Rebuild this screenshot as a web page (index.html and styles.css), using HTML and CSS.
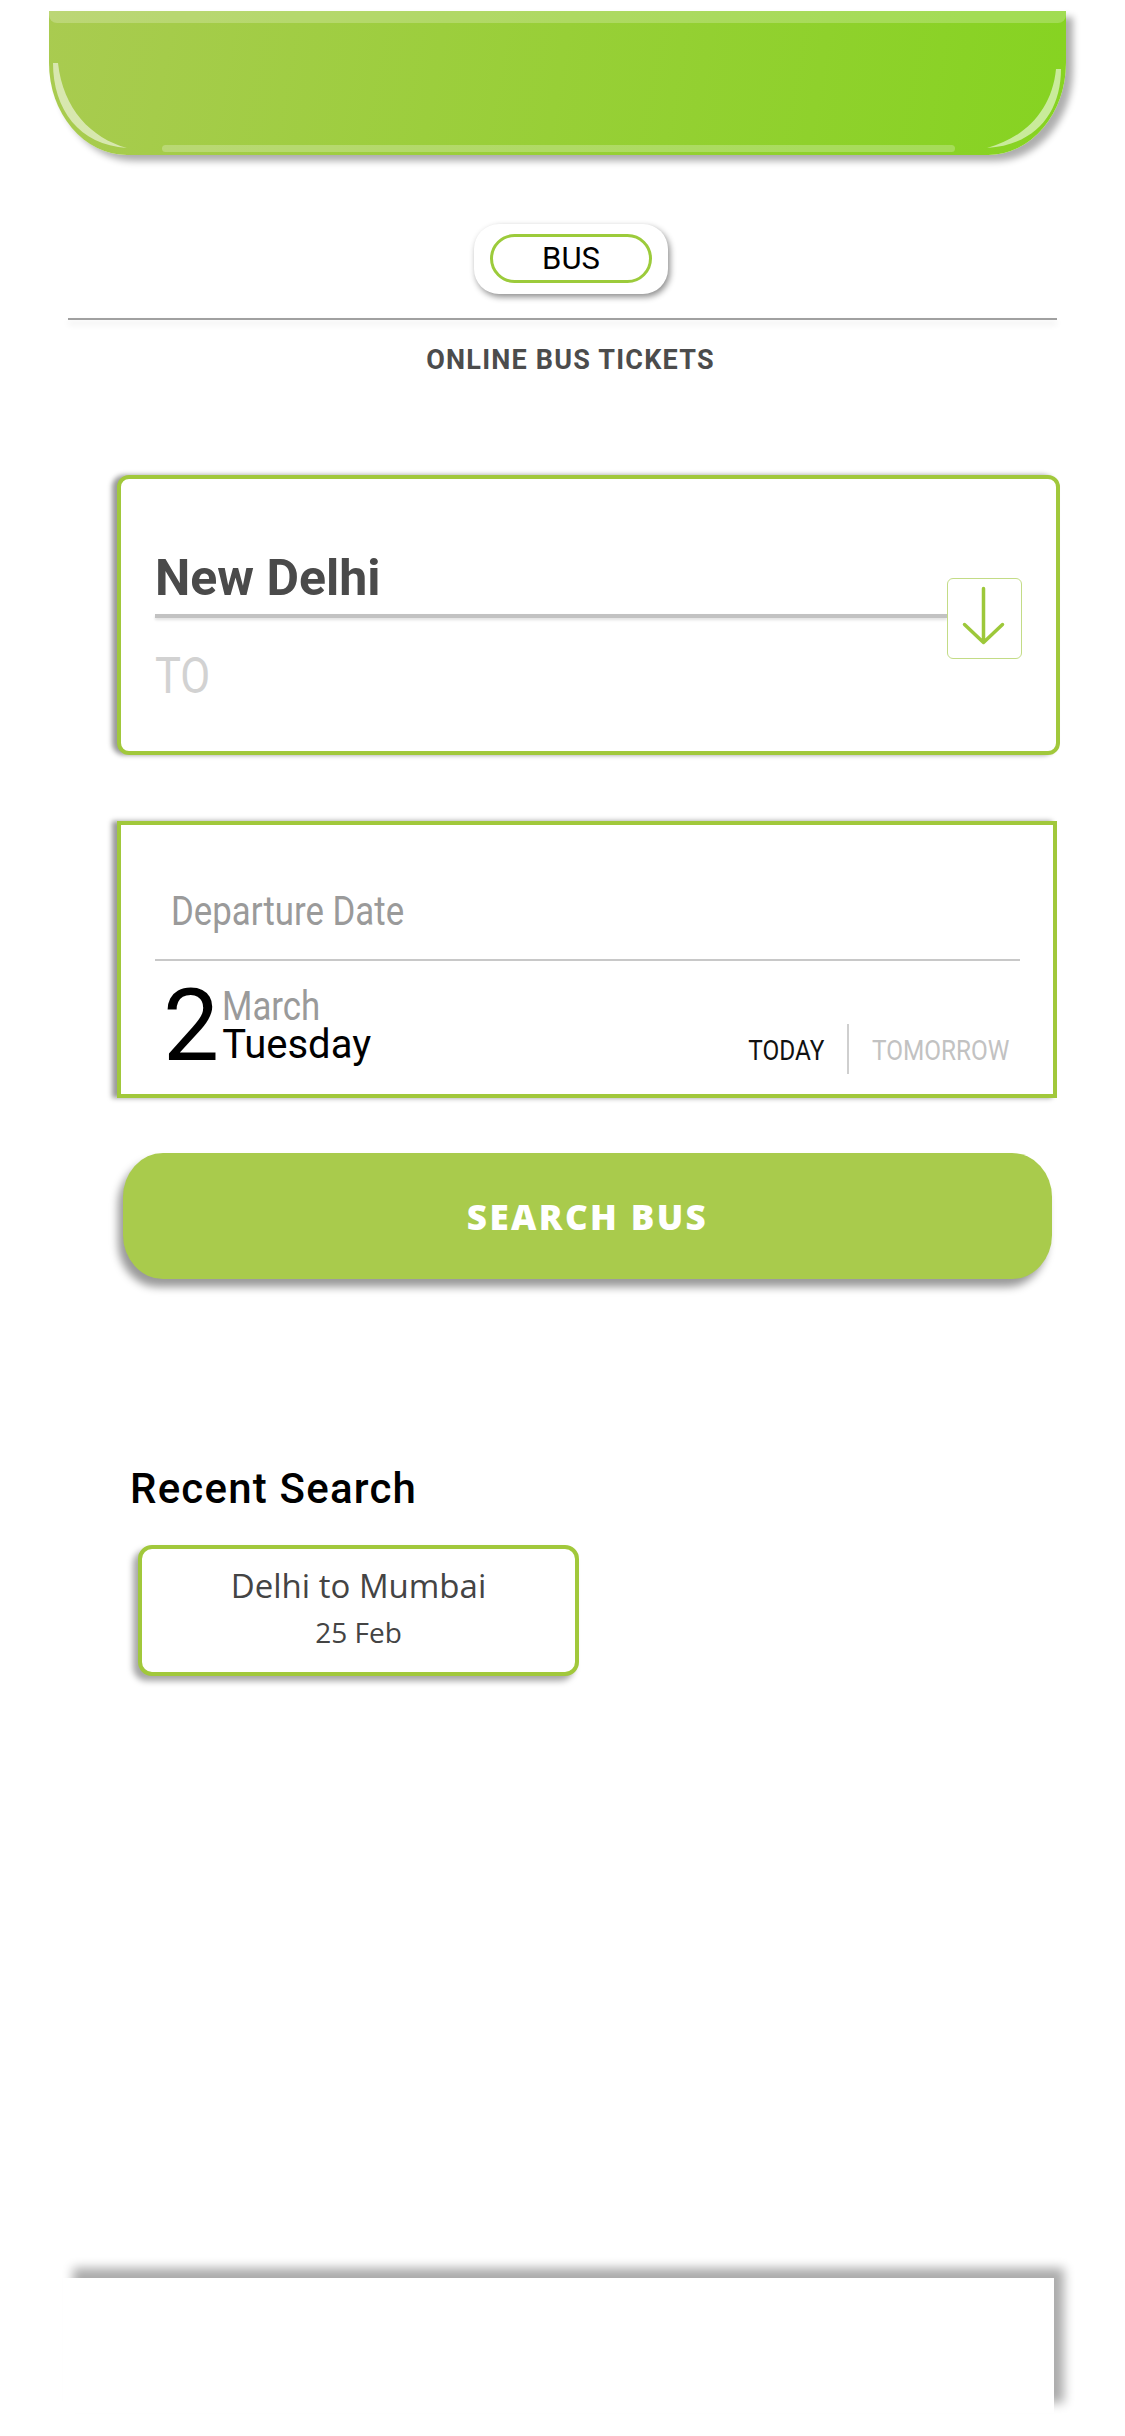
FILE: index.html
```html
<!DOCTYPE html>
<html lang="en">
<head>
<meta charset="utf-8">
<title>Online Bus Tickets</title>
<link rel="stylesheet" href="styles.css">
</head>
<body>
<div class="page">
  <header class="topbar">
    <svg class="gloss" viewBox="0 0 1017 144" preserveAspectRatio="none" aria-hidden="true">
      <path d="M4,52 C4,98 30,134 78,137 C42,127 14,98 9,52 Z" fill="rgba(255,255,255,0.55)"/>
      <path d="M1012,58 C1012,100 988,134 938,137 C975,127 1003,100 1007,58 Z" fill="rgba(255,255,255,0.55)"/>
      <rect x="113" y="134" width="793" height="7" rx="3.5" fill="rgba(255,255,255,0.24)"/>
    </svg>
  </header>

  <div class="mode">
    <div class="mode-box"><span class="mode-pill">BUS</span></div>
  </div>

  <div class="rule"></div>
  <h1 class="tagline">ONLINE BUS TICKETS</h1>

  <section class="card route">
    <div class="route-fields">
      <div class="city">New Delhi</div>
      <div class="route-line"></div>
      <div class="city-to"><span class="cond">TO</span></div>
    </div>
    <div class="swap">
      <svg viewBox="0 0 72 78" aria-hidden="true">
        <path d="M35.5 9.5 V63.5 M16.5 45.5 L35.5 63.5 L54.5 45.5" fill="none" stroke="#9dc83a" stroke-width="3.5" stroke-linecap="round" stroke-linejoin="round"/>
      </svg>
    </div>
  </section>

  <section class="card date">
    <div class="date-label"><span class="cond">Departure Date</span></div>
    <div class="date-line"></div>
    <div class="date-row">
      <div class="day">2</div>
      <div class="month-week">
        <div class="month"><span class="cond">March</span></div>
        <div class="weekday">Tuesday</div>
      </div>
      <div class="quick">
        <span class="quick-opt today"><span class="cond cond-r">TODAY</span></span>
        <span class="quick-sep"></span>
        <span class="quick-opt tomorrow"><span class="cond">TOMORROW</span></span>
      </div>
    </div>
  </section>

  <button class="search" type="button">SEARCH BUS</button>

  <h2 class="recent-title">Recent Search</h2>
  <div class="recent-card">
    <div class="recent-route">Delhi to Mumbai</div>
    <div class="recent-date">25 Feb</div>
  </div>

  <nav class="bottom-bar"></nav>
</div>
</body>
</html>
```

FILE: styles.css
```css
* { box-sizing: border-box; }

body {
  margin: 0;
  background: #ffffff;
  font-family: Roboto, "Noto Sans", sans-serif;
}

.page {
  width: 1125px;
  min-height: 2436px;
  display: flex;
  flex-direction: column;
  align-items: flex-start;
}

/* ---------- top green bar ---------- */
.topbar {
  position: relative;
  margin: 11px 0 0 49px;
  width: 1017px;
  height: 144px;
  border-radius: 0 0 78px 78px / 0 0 92px 92px;
  background: linear-gradient(100deg, #a9cb50 0%, #98cf37 50%, #86d321 100%);
  box-shadow: 7px 6px 7px rgba(0, 0, 0, 0.32);
}

.topbar::before {
  content: "";
  position: absolute;
  left: 0;
  right: 0;
  top: 0;
  height: 12px;
  background: rgba(255, 255, 255, 0.22);
  border-radius: 0 0 8px 8px;
}

.gloss {
  position: absolute;
  left: 0;
  top: 0;
  width: 100%;
  height: 100%;
}

/* ---------- mode selector ---------- */
.mode {
  margin: 69px 0 0 474px;
}

.mode-box {
  width: 194px;
  height: 70px;
  padding: 10px 16px;
  background: #fff;
  border-radius: 25px;
  box-shadow: 2px 3px 6px rgba(0, 0, 0, 0.45);
}

.mode-pill {
  display: block;
  height: 49px;
  border: 3px solid #9ccb3b;
  border-radius: 25px;
  text-align: center;
  line-height: 43px;
  font-size: 31px;
  color: #000;
}

.rule {
  margin: 24px 0 0 68px;
  width: 989px;
  height: 2px;
  background: #a0a0a0;
  box-shadow: 0 4px 6px rgba(0, 0, 0, 0.12);
}

.tagline {
  margin: 27px 0 0;
  width: 1125px;
  padding-left: 16px;
  text-align: center;
  font-size: 27px;
  line-height: 27px;
  font-weight: 700;
  letter-spacing: 1.2px;
  color: #4c4c4c;
}

/* ---------- cards ---------- */
.card {
  margin-left: 117px;
  background: #fff;
  border: 4px solid #a1c83b;
}

.cond {
  display: inline-block;
  transform: scaleX(0.87);
  transform-origin: left center;
}

.cond-r {
  transform-origin: right center;
}

.route {
  margin-top: 101px;
  width: 943px;
  height: 280px;
  border-radius: 12px;
  padding: 69px 34px 0 34px;
  display: flex;
  align-items: flex-start;
  box-shadow: -5px 0 5px rgba(0, 0, 0, 0.4);
}

.route-fields {
  flex: 1;
}

.city {
  font-size: 50px;
  line-height: 60px;
  font-weight: 700;
  color: #4a4a4a;
}

.route-line {
  margin-top: 6px;
  height: 4px;
  background: #c2c2c2;
  box-shadow: 0 2px 3px rgba(0, 0, 0, 0.12);
}

.city-to {
  margin-top: 28px;
  font-size: 50px;
  line-height: 60px;
  color: #d2d2d2;
}

.swap {
  margin-top: 30px;
  width: 75px;
  height: 81px;
  border: 1.5px solid #c3dc86;
  border-radius: 6px;
  background: #fff;
}

.swap svg {
  display: block;
  width: 72px;
  height: 78px;
}

.date {
  margin-top: 66px;
  width: 940px;
  height: 277px;
  padding: 63px 33px 0 34px;
  box-shadow: -5px 0 5px rgba(0, 0, 0, 0.4);
}

.date-label {
  margin-left: 16px;
  font-size: 40px;
  line-height: 48px;
  color: #9a9a9a;
}

.date-line {
  margin-top: 23px;
  height: 2px;
  background: #c8c8c8;
}

.date-row {
  margin-top: 15px;
  display: flex;
  align-items: flex-start;
}

.day {
  margin-left: 8px;
  font-size: 100px;
  line-height: 100px;
  color: #000;
}

.month-week {
  margin: 8px 0 0 3px;
  font-size: 40px;
}

.month {
  height: 38px;
  line-height: 46px;
  color: #9a9a9a;
}

.weekday {
  height: 46px;
  line-height: 46px;
  color: #000;
}

.quick {
  margin: 0 -10px 2px auto;
  align-self: flex-end;
  height: 50px;
  display: flex;
  align-items: center;
  font-size: 28px;
  line-height: 28px;
}

.quick-opt {
  padding-top: 4px;
}

.today {
  color: #111;
}

.tomorrow {
  color: #c2c2c2;
}

.quick-sep {
  width: 2px;
  height: 50px;
  margin: 0 23px;
  background: #cfcfcf;
}

/* ---------- search button ---------- */
.search {
  margin: 55px 0 0 123px;
  width: 929px;
  height: 126px;
  border: none;
  border-radius: 40px / 44px;
  background: #a9cb4c;
  color: #fff;
  font-family: "Open Sans", sans-serif;
  font-size: 35px;
  font-weight: 800;
  letter-spacing: 2.4px;
  box-shadow: -5px 8px 8px rgba(0, 0, 0, 0.4);
  cursor: pointer;
}

/* ---------- recent search ---------- */
.recent-title {
  margin: 185px 0 0 130px;
  font-size: 42px;
  line-height: 50px;
  font-weight: 500;
  letter-spacing: 1.2px;
  color: #000;
}

.recent-card {
  margin: 31px 0 0 138px;
  width: 441px;
  height: 131px;
  padding-top: 17px;
  border: 4px solid #a1c83b;
  border-radius: 14px;
  background: #fff;
  text-align: center;
  font-family: "Open Sans", sans-serif;
  color: #444;
  box-shadow: -5px 5px 6px rgba(0, 0, 0, 0.35);
}

.recent-route {
  font-size: 33px;
  line-height: 40px;
}

.recent-date {
  margin-top: 8px;
  font-size: 28px;
  line-height: 36px;
}

/* ---------- bottom bar ---------- */
.bottom-bar {
  margin: auto 0 23px 63px;
  width: 991px;
  height: 135px;
  background: #fff;
  box-shadow: 10px -10px 10px rgba(0, 0, 0, 0.33);
}
```
